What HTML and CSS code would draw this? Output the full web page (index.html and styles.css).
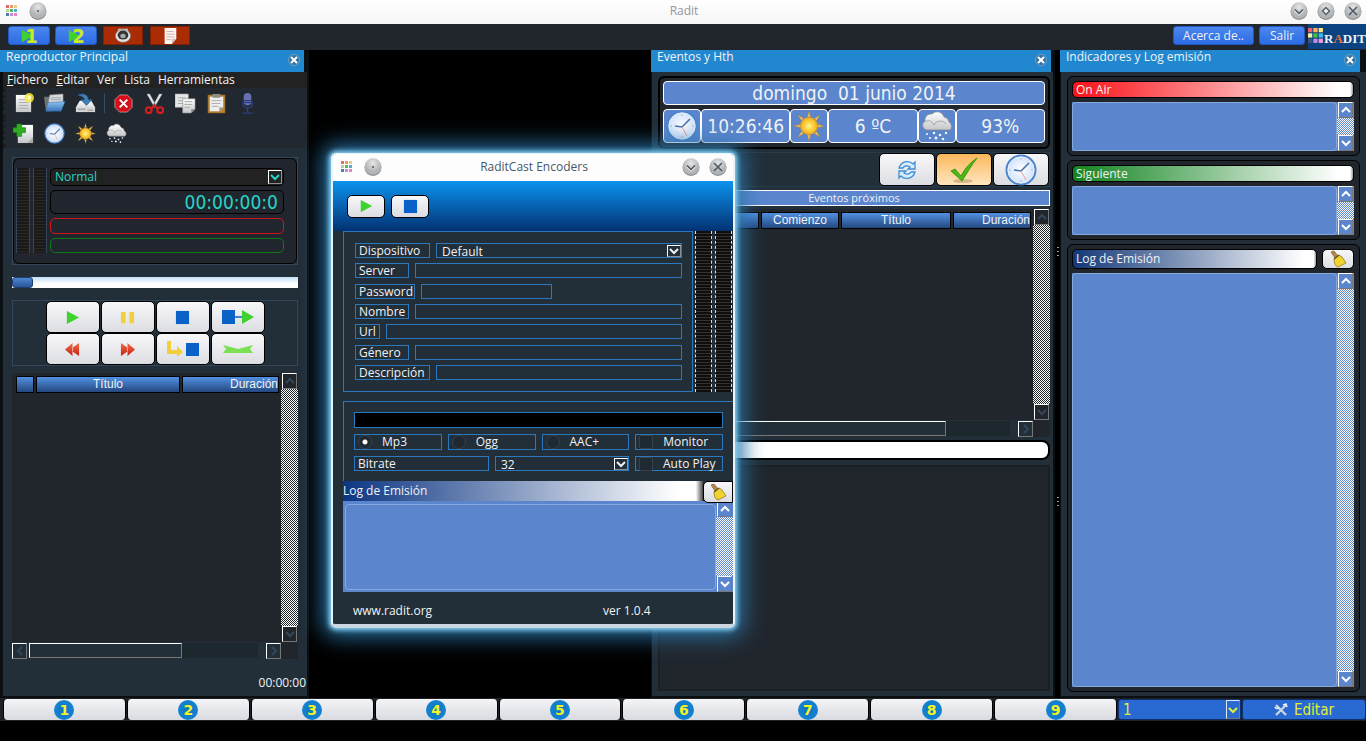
FILE: index.html
```html
<!DOCTYPE html>
<html lang="es">
<head>
<meta charset="utf-8">
<title>Radit</title>
<link rel="stylesheet" href="styles.css">
</head>
<body>
<svg class="defs" aria-hidden="true">
  <defs>
    <linearGradient id="gGrey" x1="0" y1="0" x2="0" y2="1"><stop offset="0" stop-color="#fff"/><stop offset="1" stop-color="#c4c6c8"/></linearGradient>
    <linearGradient id="gBlue" x1="0" y1="0" x2="0" y2="1"><stop offset="0" stop-color="#8fc0ee"/><stop offset="1" stop-color="#3a78bd"/></linearGradient>
    <linearGradient id="gRed" x1="0" y1="0" x2="0" y2="1"><stop offset="0" stop-color="#f0704a"/><stop offset="1" stop-color="#c81d10"/></linearGradient>
    <radialGradient id="gFace"><stop offset="0" stop-color="#fff"/><stop offset="1" stop-color="#cfe0fb"/></radialGradient>
    <radialGradient id="gSun"><stop offset="0" stop-color="#fff3a0"/><stop offset="0.5" stop-color="#ffd23e"/><stop offset="1" stop-color="#f3b01c"/></radialGradient>
    <radialGradient id="gKnob" cx="0.5" cy="0.3"><stop offset="0" stop-color="#e6e6e6"/><stop offset="1" stop-color="#b2b4b6"/></radialGradient>
  </defs>
  <symbol id="grid" viewBox="0 0 12 12">
    <path fill="#e0696e" d="M0 0h3v3H0z"/><path fill="#ea9a70" d="M4 0h3v3H4z"/><path fill="#e9cf82" d="M8 0h3v3H8z"/>
    <path fill="#b4d6a0" d="M0 4h3v3H0z"/><path fill="#58b860" d="M4 4h3v3H4z"/><path fill="#4fb0cf" d="M8 4h3v3H8z"/>
    <path fill="#4a7fb0" d="M0 8h3v3H0z"/><path fill="#c78fd0" d="M4 8h3v3H4z"/><path fill="#e585bd" d="M8 8h3v3H8z"/>
  </symbol>
  <symbol id="logo-grid" viewBox="0 0 15 15">
    <path fill="#f0606a" d="M0 0h4v4H0z"/><path fill="#ffb45a" d="M5 0h4v4H5z"/><path fill="#ffe27a" d="M10 0h4v4h-4z"/>
    <path fill="#f4f0a8" d="M0 5h4v4H0z"/><path fill="#3cc23c" d="M5 5h4v4H5z"/><path fill="#47b7ee" d="M10 5h4v4h-4z"/>
    <path fill="#3c5878" d="M0 10h4v4H0z"/><path fill="#c58be0" d="M5 10h4v4H5z"/><path fill="#f49ad0" d="M10 10h4v4h-4z"/>
  </symbol>
  <symbol id="knob" viewBox="0 0 18 18"><circle cx="9" cy="9.500" r="8.500" fill="#8c8e90"/><circle cx="9" cy="8.500" r="8.300" fill="url(#gKnob)"/></symbol>
  <symbol id="k-dot" viewBox="0 0 18 18"><use href="#knob"/><circle cx="9" cy="9" r="1" fill="#555"/></symbol>
  <symbol id="k-down" viewBox="0 0 18 18"><use href="#knob"/><path d="M5 8.500l4 4 4-4" fill="none" stroke="#fff" stroke-width="1.600"/><path d="M5 7.500l4 4 4-4" fill="none" stroke="#4e5a64" stroke-width="1.600"/></symbol>
  <symbol id="k-max" viewBox="0 0 18 18"><use href="#knob"/><path d="M9 5.500l3.500 3.500L9 12.500 5.500 9z" fill="#eee" stroke="#55606a" stroke-width="1.500"/></symbol>
  <symbol id="k-close" viewBox="0 0 18 18"><use href="#knob"/><path d="M5 5l8 8M13 5l-8 8" stroke="#4e5a64" stroke-width="1.600"/></symbol>
  <symbol id="dock-x" viewBox="0 0 12 12"><circle cx="6" cy="6" r="5.500" fill="#35729f" stroke="#7fa9c8" stroke-width=".8"/><path d="M3 3l6 6M9 3l-6 6" stroke="#fff" stroke-width="2"/></symbol>
  <symbol id="new" viewBox="0 0 22 22"><path d="M3 2h16v18H3z" fill="url(#gGrey)"/><path d="M6 7h8M6 10h10M6 13h10M6 16h10" stroke="#aaa" stroke-width="1"/><circle cx="17" cy="5" r="5" fill="#f7e93a" opacity=".85"/><circle cx="17" cy="5" r="2" fill="#fffcc0"/></symbol>
  <symbol id="open" viewBox="0 0 22 22"><path d="M0 4h6l1 2h2v13H2z" fill="#6f7478"/><path d="M6 2l14-1v12H4z" fill="#d8dadc" stroke="#888" stroke-width=".6"/><path d="M7 5h11M7 7h11" stroke="#a0a3a6"/><path d="M4 10l18-1-4 10H2z" fill="url(#gBlue)" stroke="#2f66a5" stroke-width=".5"/></symbol>
  <symbol id="save" viewBox="0 0 22 22"><path d="M5 8h12l4 7v5H1v-5z" fill="url(#gGrey)"/><path d="M1 15h20v5H1z" fill="#d3d5d6"/><path d="M3 17h8M13 18h6" stroke="#8b8e90"/><path d="M3 2c7-3 11 1 11 5h4l-6 6-6-6h4c0-2-3-4-7-5z" fill="#3e7fb6" stroke="#285e92" stroke-width=".6"/></symbol>
  <symbol id="stop-x" viewBox="0 0 22 22"><path d="M7 2h8l5 5v8l-5 5H7l-5-5V7z" fill="#d40f1b" stroke="#f4d0d0" stroke-width=".6"/><path d="M7 7l8 8M15 7l-8 8" stroke="#fff" stroke-width="2"/></symbol>
  <symbol id="cut" viewBox="0 0 22 22"><path d="M3 1l3 0 7 13-2 1zM19 1l-3 0-7 13 2 1z" fill="#e3e5e6" stroke="#999" stroke-width=".4"/><g fill="none" stroke="#d61d22" stroke-width="2.200"><ellipse cx="5" cy="18" rx="3" ry="3"/><ellipse cx="17" cy="18" rx="3" ry="3"/><path d="M8 16l3-3 3 3"/></g></symbol>
  <symbol id="copy" viewBox="0 0 22 22"><path d="M0 1h14v14H0z" fill="#e5e6e7" stroke="#999" stroke-width=".6"/><path d="M3 5h8M3 8h7M3 11h7" stroke="#aaa"/><path d="M8 6h13v11l-4 4H8z" fill="url(#gGrey)" stroke="#888" stroke-width=".6"/><path d="M10 9h8M10 12h8M10 15h6" stroke="#aaa"/><path d="M17 21v-4h4z" fill="#888"/></symbol>
  <symbol id="paste" viewBox="0 0 22 22"><path d="M2 2h18v19H2z" fill="#b88638" stroke="#7d5413" stroke-width=".6"/><path d="M4 4h14v11l-4 4H4z" fill="#eee"/><path d="M6 8h10M6 11h9M6 14h7" stroke="#aaa"/><path d="M7 1h8v4H7z" fill="#8b9087"/><path d="M14 19v-4h4z" fill="#999"/></symbol>
  <symbol id="mic" viewBox="0 0 22 22"><rect x="7" y="0" width="8" height="13" rx="4" fill="#6870b4"/><path d="M7 8h8M7 10h8" stroke="#26306e"/><path d="M6 9v2c0 6 10 6 10 0V9M11 16v4M6 21h10" fill="none" stroke="#303e8c" stroke-width="1.400"/></symbol>
  <symbol id="add" viewBox="0 0 22 22"><path d="M5 2h16v19H5z" fill="url(#gGrey)"/><path d="M15 21l6-6v6z" fill="#aaa"/><path d="M4 1h5v4h4v5H9v4H4v-4H0V5h4z" fill="#2fae20" stroke="#197b13" stroke-width=".7"/></symbol>
  <symbol id="clock" viewBox="0 0 32 32"><circle cx="16" cy="16" r="14.500" fill="url(#gFace)" stroke="#4a86cc" stroke-width="2"/><circle cx="16" cy="16" r="13" fill="none" stroke="#e6effb" stroke-width="1"/><path d="M16 4v2M16 26v2M4 16h2M26 16h2" stroke="#a9bdd8" stroke-width="1"/><path d="M9 16l7 1 8-8" fill="none" stroke="#4a72ac" stroke-width="1.600"/><path d="M16 17l5 9" stroke="#f0a090" stroke-width="1"/></symbol>
  <symbol id="sun" viewBox="0 0 32 32"><path d="M16 1l1.500 6h-3zM16 31l1.500-6h-3zM1 16l6-1.500v3zM31 16l-6-1.500v3zM5 5l5.500 3.500-2 2zM27 5l-5.500 3.500 2 2zM5 27l5.500-3.500-2-2zM27 27l-5.500-3.500 2-2z" fill="#f2c46a" stroke="#b9822c" stroke-width=".5"/><circle cx="16" cy="16" r="8.500" fill="url(#gSun)" stroke="#e09a1c" stroke-width=".8"/></symbol>
  <symbol id="snow" viewBox="0 0 32 32"><path d="M5 20a5 5 0 0 1-1-9 6 6 0 0 1 7-7 7 7 0 0 1 12 3 6 6 0 0 1 5 5 5 5 0 0 1 1 8z" fill="url(#gGrey)" stroke="#85898d" stroke-width=".8"/><path d="M4 12c4-3 8 0 9 3 2-5 10-5 12-1" fill="none" stroke="#a3a6a9"/><g fill="#eef6ff"><circle cx="6" cy="24" r="1.100"/><circle cx="13" cy="23" r="1.300"/><circle cx="19" cy="25" r="1.300"/><circle cx="25" cy="23" r="1.200"/><circle cx="9" cy="28" r="1.100"/><circle cx="15" cy="28" r="1.500"/><circle cx="22" cy="29" r="1.300"/></g></symbol>
  <symbol id="speaker" viewBox="0 0 22 20"><path d="M4 7l2-5h10l2 5z" fill="#d0d2d4"/><ellipse cx="11" cy="10" rx="8.500" ry="7" fill="#e2e2e2" stroke="#666" stroke-width=".6"/><ellipse cx="11" cy="9" rx="6" ry="5" fill="#333"/><ellipse cx="11" cy="10" rx="3" ry="2.500" fill="#a5a9ad"/></symbol>
  <symbol id="page" viewBox="0 0 22 20"><path d="M5 1h13v12l-5 6H5z" fill="#fbf4f0"/><path d="M7 5h8M7 8h9M7 11h9M7 14h5" stroke="#d9a9a0"/><path d="M13 19v-6h5z" fill="#c9c1bc"/></symbol>
  <symbol id="play" viewBox="0 0 16 16"><path d="M2 1l13 7-13 7z" fill="#3fd22e"/></symbol>
  <symbol id="pause" viewBox="0 0 16 16"><path d="M1 2h5v12H1zM10 2h5v12h-5z" fill="#f2d03c"/></symbol>
  <symbol id="stop" viewBox="0 0 16 16"><path d="M1 1h14v14H1z" fill="#0a62c9"/></symbol>
  <symbol id="stopplay" viewBox="0 0 34 16"><path d="M1 1h13v14H1z" fill="#0a62c9"/><path d="M14 8h8" stroke="#0a62c9" stroke-width="1.500"/><path d="M21 1l12 7-12 7z" fill="#3fd22e"/></symbol>
  <symbol id="rew" viewBox="0 0 16 16"><path d="M8 1v5l7-5v14l-7-5v5L0 8z" fill="url(#gRed)"/><path d="M8 6v4" stroke="#fff" stroke-width=".6"/></symbol>
  <symbol id="fwd" viewBox="0 0 16 16"><path d="M8 1v5L1 1v14l7-5v5l8-7z" fill="url(#gRed)"/><path d="M8 6v4" stroke="#fff" stroke-width=".6"/></symbol>
  <symbol id="jump" viewBox="0 0 34 16"><path d="M1 0h4v9h6V5l6 6-6 5v-3H1z" fill="#f2cf3e"/><path d="M20 2h13v13H20z" fill="#0a62c9"/></symbol>
  <symbol id="fade" viewBox="0 0 32 10"><path d="M1 1l15 4 15-4-3 4 3 4H1l3-4z" fill="#7be052"/></symbol>
  <symbol id="refresh" viewBox="0 0 20 20"><g fill="#d9ecfb" stroke="#3d8fd6" stroke-width="1.300"><path d="M2 8c2-7 10-8 14-4l2-2v7h-7l2-2c-3-2-6-1-7 1z"/><path d="M18 12c-2 7-10 8-14 4l-2 2v-7h7l-2 2c3 2 6 1 7-1z"/></g></symbol>
  <symbol id="check" viewBox="0 0 30 28"><ellipse cx="14" cy="25" rx="10" ry="2" fill="#8a6a30" opacity=".35"/><path d="M2 15l4-2 6 7c4-8 9-13 16-18-6 8-10 15-15 23z" fill="#4fb813" stroke="#2f8a0b" stroke-width=".8"/></symbol>
  <symbol id="broom" viewBox="0 0 20 20"><path d="M3 3l3-1 4 5-3 2z" fill="#b58a4c" stroke="#6d4c1c" stroke-width=".6"/><path d="M6 10l5-4 3 2 4 6-8 4c-3-1-4-4-4-8z" fill="#efd332" stroke="#9a7c14" stroke-width=".8"/><path d="M6 10l5-4" stroke="#6a5220" stroke-width="1.500"/></symbol>
  <symbol id="tools" viewBox="0 0 14 14"><path d="M2 2l10 10M12 2L2 12" stroke="#cfd8e2" stroke-width="2.200"/><path d="M1 4a3 3 0 0 0 4 1M9 2l3-1 1 3" fill="none" stroke="#e7edf4" stroke-width="1.600"/></symbol>
  <symbol id="up" viewBox="0 0 10 8"><path d="M1 6l4-4 4 4" fill="none" stroke="currentColor" stroke-width="2"/></symbol>
  <symbol id="down" viewBox="0 0 10 8"><path d="M1 2l4 4 4-4" fill="none" stroke="currentColor" stroke-width="2"/></symbol>
  <symbol id="left" viewBox="0 0 8 10"><path d="M6 1L2 5l4 4" fill="none" stroke="currentColor" stroke-width="2"/></symbol>
  <symbol id="right" viewBox="0 0 8 10"><path d="M2 1l4 4-4 4" fill="none" stroke="currentColor" stroke-width="2"/></symbol>
</svg>

<div class="app">
  <header class="titlebar">
    <div class="side">
      <svg class="i12"><use href="#grid"/></svg>
      <button class="knob" aria-label="Fijar"><svg><use href="#k-dot"/></svg></button>
    </div>
    <h1>Radit</h1>
    <div class="side end">
      <button class="knob" aria-label="Minimizar"><svg><use href="#k-down"/></svg></button>
      <button class="knob" aria-label="Maximizar"><svg><use href="#k-max"/></svg></button>
      <button class="knob" aria-label="Cerrar"><svg><use href="#k-close"/></svg></button>
    </div>
  </header>

  <nav class="topbar">
    <button class="tb-blue tb-num"><svg class="i14"><use href="#play"/></svg><b>1</b></button>
    <button class="tb-blue tb-num"><svg class="i14"><use href="#play"/></svg><b>2</b></button>
    <button class="tb-red" aria-label="Altavoz"><svg><use href="#speaker"/></svg></button>
    <button class="tb-red" aria-label="Documento"><svg><use href="#page"/></svg></button>
    <span class="spacer"></span>
    <button class="tb-blue tb-about">Acerca de..</button>
    <button class="tb-blue tb-exit">Salir</button>
    <div class="logo"><svg><use href="#logo-grid"/></svg><span>R<i>A</i>DIT</span></div>
  </nav>

  <main class="work">
    <section class="dock dock-left">
      <div class="dock-title"><h2>Reproductor Principal</h2><button aria-label="Cerrar panel"><svg><use href="#dock-x"/></svg></button></div>
      <div class="dock-body">
        <nav class="menubar"><a href="#f"><u>F</u>ichero</a><a href="#e"><u>E</u>ditar</a><a href="#v">Ver</a><a href="#l">Lista</a><a href="#h">Herramientas</a></nav>
        <div class="tools">
          <button aria-label="Nuevo"><svg><use href="#new"/></svg></button><button aria-label="Abrir"><svg><use href="#open"/></svg></button><button aria-label="Guardar"><svg><use href="#save"/></svg></button><span class="sep"></span><button aria-label="Borrar"><svg><use href="#stop-x"/></svg></button><button aria-label="Cortar"><svg><use href="#cut"/></svg></button><button aria-label="Copiar"><svg><use href="#copy"/></svg></button><button aria-label="Pegar"><svg><use href="#paste"/></svg></button><button aria-label="Micrófono"><svg><use href="#mic"/></svg></button>
        </div>
        <div class="tools">
          <button aria-label="Añadir"><svg><use href="#add"/></svg></button><button aria-label="Hora"><svg><use href="#clock"/></svg></button><button aria-label="Temperatura"><svg><use href="#sun"/></svg></button><button aria-label="Humedad"><svg><use href="#snow"/></svg></button>
        </div>
        <div class="player">
          <div class="display">
            <span class="meter"></span><span class="meter"></span>
            <div class="readouts">
              <div class="mode select"><select aria-label="Modo"><option>Normal</option></select><span class="arrow"><svg><use href="#down"/></svg></span></div>
              <output class="time">00:00:00:0</output>
              <div class="bar red"></div>
              <div class="bar green"></div>
            </div>
          </div>
        </div>
        <input class="seek" type="range" value="0" aria-label="Posición">
        <div class="transport">
          <button aria-label="Reproducir"><svg class="i16"><use href="#play"/></svg></button>
          <button aria-label="Pausa"><svg class="i16"><use href="#pause"/></svg></button>
          <button aria-label="Parar"><svg class="i16"><use href="#stop"/></svg></button>
          <button aria-label="Parar y seguir"><svg class="i34"><use href="#stopplay"/></svg></button>
          <button aria-label="Atrás"><svg class="i16"><use href="#rew"/></svg></button>
          <button aria-label="Adelante"><svg class="i16"><use href="#fwd"/></svg></button>
          <button aria-label="Parar al final"><svg class="i34"><use href="#jump"/></svg></button>
          <button aria-label="Fundido"><svg class="i32"><use href="#fade"/></svg></button>
        </div>
        <div class="list">
          <div class="list-view">
            <table class="grid"><colgroup><col class="c-20"><col class="c-146"><col></colgroup><thead><tr><th></th><th>Título</th><th class="cut">Duración</th></tr></thead></table>
          </div>
          <div class="vscroll dark"><button aria-label="Subir"><svg><use href="#up"/></svg></button><span class="track"></span><button aria-label="Bajar"><svg><use href="#down"/></svg></button></div>
          <div class="hscroll"><button aria-label="Izquierda"><svg><use href="#left"/></svg></button><span class="track"><span class="thumb thumb-a"></span></span><button aria-label="Derecha"><svg><use href="#right"/></svg></button></div>
        </div>
        <div class="total">00:00:00</div>
      </div>
    </section>

    <div class="stage"></div>

    <section class="dock dock-mid">
      <div class="dock-title"><h2>Eventos y Hth</h2><button aria-label="Cerrar panel"><svg><use href="#dock-x"/></svg></button></div>
      <div class="dock-body">
        <div class="clockbox">
          <div class="cell date">domingo&nbsp; 01 junio 2014</div>
          <div class="cell"><svg><use href="#clock"/></svg></div><div class="cell">10:26:46</div>
          <div class="cell"><svg><use href="#sun"/></svg></div><div class="cell">6 ºC</div>
          <div class="cell"><svg><use href="#snow"/></svg></div><div class="cell">93%</div>
        </div>
        <div class="evt-tools">
          <button aria-label="Actualizar"><svg class="i20"><use href="#refresh"/></svg></button>
          <button class="on" aria-label="Activar"><svg class="i28"><use href="#check"/></svg></button>
          <button aria-label="Reloj"><svg class="i30"><use href="#clock"/></svg></button>
        </div>
        <h3 class="evt-title">Eventos próximos</h3>
        <div class="list evt-list">
          <div class="list-view">
            <table class="grid"><colgroup><col><col class="c-80"><col class="c-112"><col class="c-80"></colgroup><thead><tr><th></th><th>Comienzo</th><th>Título</th><th class="cut">Duración</th></tr></thead></table>
          </div>
          <div class="vscroll dark"><button aria-label="Subir"><svg><use href="#up"/></svg></button><span class="track"></span><button aria-label="Bajar"><svg><use href="#down"/></svg></button></div>
          <div class="hscroll"><button aria-label="Izquierda"><svg><use href="#left"/></svg></button><span class="track"><span class="thumb thumb-b"></span></span><button aria-label="Derecha"><svg><use href="#right"/></svg></button></div>
        </div>
        <div class="pill"></div>
        <div class="well"></div>
      </div>
    </section>

    <div class="splitter"><span></span><span></span></div>

    <section class="dock dock-right">
      <div class="dock-title"><h2>Indicadores y Log emisión</h2><button aria-label="Cerrar panel"><svg><use href="#dock-x"/></svg></button></div>
      <div class="dock-body">
        <div class="logbox">
          <label class="tag tag-red" for="onair">On Air</label>
          <div class="area"><textarea id="onair" readonly></textarea><div class="vscroll"><button aria-label="Subir"><svg><use href="#up"/></svg></button><span class="track"></span><button aria-label="Bajar"><svg><use href="#down"/></svg></button></div></div>
        </div>
        <div class="logbox">
          <label class="tag tag-green" for="next">Siguiente</label>
          <div class="area"><textarea id="next" readonly></textarea><div class="vscroll"><button aria-label="Subir"><svg><use href="#up"/></svg></button><span class="track"></span><button aria-label="Bajar"><svg><use href="#down"/></svg></button></div></div>
        </div>
        <div class="logbox grow">
          <div class="loghead"><label class="tag tag-blue" for="log">Log de Emisión</label><button class="sweep" aria-label="Limpiar"><svg class="i20"><use href="#broom"/></svg></button></div>
          <div class="area"><textarea id="log" readonly></textarea><div class="vscroll"><button aria-label="Subir"><svg><use href="#up"/></svg></button><span class="track"></span><button aria-label="Bajar"><svg><use href="#down"/></svg></button></div></div>
        </div>
      </div>
    </section>
  </main>

  <footer class="carts">
    <button class="cart"><b>1</b></button><button class="cart"><b>2</b></button><button class="cart"><b>3</b></button><button class="cart"><b>4</b></button><button class="cart"><b>5</b></button><button class="cart"><b>6</b></button><button class="cart"><b>7</b></button><button class="cart"><b>8</b></button><button class="cart"><b>9</b></button>
    <div class="select bank"><select aria-label="Banco"><option>1</option></select><span class="arrow"><svg><use href="#down"/></svg></span></div>
    <button class="edit"><svg class="i14"><use href="#tools"/></svg>Editar</button>
  </footer>
</div>

<section class="dialog" role="dialog" aria-label="RaditCast Encoders">
  <header class="dlg-title">
    <div class="side">
      <svg class="i12"><use href="#grid"/></svg>
      <button class="knob" aria-label="Fijar"><svg><use href="#k-dot"/></svg></button>
    </div>
    <h2>RaditCast Encoders</h2>
    <div class="side end">
      <button class="knob" aria-label="Minimizar"><svg><use href="#k-down"/></svg></button>
      <button class="knob" aria-label="Cerrar"><svg><use href="#k-close"/></svg></button>
    </div>
  </header>
  <div class="dlg-head">
    <button aria-label="Emitir"><svg class="i14"><use href="#play"/></svg></button>
    <button aria-label="Detener"><svg class="i16"><use href="#stop"/></svg></button>
  </div>
  <div class="dlg-main">
    <div class="conn">
      <form class="fields">
        <div class="row"><label class="w75" for="dev">Dispositivo</label><div class="select"><select id="dev"><option>Default</option></select><span class="arrow"><svg><use href="#down"/></svg></span></div></div>
        <div class="row"><label class="w54" for="srv">Server</label><input id="srv"></div>
        <div class="row"><label class="w60" for="pwd">Password</label><input id="pwd" class="short" type="password"></div>
        <div class="row"><label class="w54" for="nom">Nombre</label><input id="nom"></div>
        <div class="row"><label class="w25" for="url">Url</label><input id="url"></div>
        <div class="row"><label class="w54" for="gen">Género</label><input id="gen"></div>
        <div class="row"><label class="w75" for="des">Descripción</label><input id="des"></div>
      </form>
      <span class="vu"></span><span class="vu"></span>
    </div>
    <div class="enc">
      <div class="status"></div>
      <div class="opts">
        <label><input type="radio" name="fmt" checked><span>Mp3</span></label>
        <label><input type="radio" name="fmt"><span>Ogg</span></label>
        <label><input type="radio" name="fmt"><span>AAC+</span></label>
        <label><input type="checkbox"><span>Monitor</span></label>
      </div>
      <div class="rates">
        <label class="rate" for="rate">Bitrate</label>
        <div class="select"><select id="rate"><option>32</option></select><span class="arrow"><svg><use href="#down"/></svg></span></div>
        <label class="auto"><input type="checkbox"><span>Auto Play</span></label>
      </div>
    </div>
    <div class="dlg-log"><label for="dlog">Log de Emisión</label><button class="sweep" aria-label="Limpiar"><svg class="i20"><use href="#broom"/></svg></button></div>
    <div class="area"><textarea id="dlog" readonly></textarea><div class="vscroll"><button aria-label="Subir"><svg><use href="#up"/></svg></button><span class="track"></span><button aria-label="Bajar"><svg><use href="#down"/></svg></button></div></div>
    <footer class="dlg-foot"><a href="#site">www.radit.org</a><span>ver 1.0.4</span></footer>
  </div>
</section>
</body>
</html>
```
FILE: styles.css
```css
* { box-sizing: border-box; }
html, body { height: 100%; }
body { margin: 0; background: #000; color: #f0f2f4; font: 12px/16px "Open Sans", "Noto Sans", sans-serif; overflow: hidden; }
button, input, select, textarea { font: inherit; color: inherit; margin: 0; padding: 0; border: 0; background: none; }
button { display: flex; align-items: center; justify-content: center; }
h1, h2, h3 { margin: 0; font: inherit; }
a { color: inherit; text-decoration: none; }
svg { display: block; flex: none; }
.defs { position: absolute; width: 0; height: 0; }
.i12 { width: 12px; height: 12px; }
.i14 { width: 14px; height: 14px; }
.i16 { width: 15px; height: 15px; }
.i20 { width: 20px; height: 20px; }
.i28 { width: 30px; height: 28px; }
.i30 { width: 32px; height: 32px; }
.i32 { width: 32px; height: 10px; }
.i34 { width: 34px; height: 16px; }

.app { display: flex; flex-direction: column; height: 100%; padding-bottom: 20px; }

.titlebar { display: flex; align-items: center; height: 24px; flex: none; padding: 0 4px 2px 6px; background: linear-gradient(#fff, #f6f6f6); color: #939799; }
.side { flex: 1; display: flex; align-items: center; gap: 9px; }
.end { justify-content: flex-end; }
.side .i12 { margin-right: 2px; }
.knob svg { width: 18px; height: 18px; }

.topbar { display: flex; align-items: center; height: 26px; flex: none; background: #21262d; padding: 0 0 3px 8px; }
.topbar button { height: 19px; }
.tb-blue { background: linear-gradient(#4b87ec, #2c6be6); border: 1px solid #2259c0; border-radius: 3px; }
.topbar .tb-num { width: 42px; margin-right: 5px; }
.tb-num svg { margin-right: -9px; }
.tb-num b { font: bold 20px/18px "DejaVu Sans Condensed", "DejaVu Sans", sans-serif; color: #c8ea24; position: relative; }
.tb-red { width: 40px; background: #a92c05; border: 1px solid #7d2004; margin: 0 6px 0 1px; }
.tb-red svg { width: 20px; height: 18px; }
.spacer { flex: 1; }
.tb-about { width: 81px; margin-right: 5px; }
.tb-exit { width: 46px; margin-right: 3px; }
.logo { width: 58px; height: 25px; display: flex; overflow: hidden; background: #0b4282; align-self: flex-start; }
.logo svg { width: 16px; height: 16px; margin-top: 4px; }
.logo span { font: bold 13px/30px "Liberation Serif", serif; }
.logo i { color: #e2733a; font-style: normal; }

.work { flex: 1; min-height: 0; display: flex; }
.dock { display: flex; flex-direction: column; background: #0c0f11; padding-bottom: 2px; }
.dock-title { display: flex; height: 22px; flex: none; background: #2188cf; margin-right: 5px; padding: 0 4px 0 6px; }
.dock-title h2 { flex: 1; line-height: 14px; }
.dock-title button { align-self: flex-end; padding-bottom: 6px; }
.dock-title svg { width: 12px; height: 12px; }
.dock-body { flex: 1; min-height: 0; display: flex; flex-direction: column; background: #222e38; margin-right: 2px; }
.dock-left { width: 309px; }
.dock-left .dock-body { margin-left: 3px; }
.stage { flex: 1; }
.dock-mid { width: 404px; }
.dock-mid .dock-title { margin-right: 4px; }
.splitter { width: 5px; display: flex; flex-direction: column; align-items: center; padding-top: 197px; gap: 241px; }
.splitter span { width: 2px; height: 9px; background: repeating-linear-gradient(#999 0 1px, #000 1px 4px); }
.dock-right { width: 306px; }
.dock-right .dock-title { margin-right: 6px; }

.menubar { display: flex; gap: 8px; height: 16px; flex: none; background: #222; padding-left: 4px; }
.tools { display: flex; align-items: center; height: 30px; flex: none; padding-left: 2px; background: #21282f; border-left: 3px dotted #1a1f24; }
.tools button { width: 31px; }
.tools svg { width: 21px; height: 21px; }
.tools .sep { width: 1px; height: 20px; background: #2d4f6b; margin: 0 3px; }

.player { margin: 9px 9px 0; border: 1px solid #34475a; flex: none; }
.display { display: flex; gap: 3px; border: 1px solid #000; border-radius: 6px; background: #21262e; padding: 9px 12px 10px 2px; height: 106px; }
.meter { width: 14px; border: 1px solid #34475a; border-width: 0 1px; background: repeating-linear-gradient(#191919 0 2px, #2a2826 2px 3px); }
.readouts { flex: 1; display: flex; flex-direction: column; gap: 4px; color: #27d3c5; }
.mode, .time, .bar { border: 1px solid #000; border-radius: 5px; }
.mode { height: 18px; background: #222; padding-left: 4px; }
.time { height: 24px; text-align: right; padding-right: 5px; font: 19px/22px "DejaVu Sans Condensed", "DejaVu Sans", sans-serif; }
.bar { height: 16px; }
.red { border-color: #d0161c; }
.green { border-color: #0c7a17; }

.select { display: flex; align-items: center; }
.select select { appearance: none; flex: 1; min-width: 0; height: 100%; outline: 0; }
.mode select { padding-bottom: 2px; }
.arrow { width: 14px; height: 14px; display: flex; align-items: center; justify-content: center; border: 1px solid #fff; border-right-color: #8a8f94; border-bottom-color: #8a8f94; pointer-events: none; }
.arrow svg { width: 10px; height: 8px; }
.mode .arrow { margin-right: 1px; }

.seek { appearance: none; height: 11px; margin: 12px 9px 0; flex: none; background: linear-gradient(#c3dff7, #fff 60%); }
.seek::-webkit-slider-thumb { appearance: none; width: 21px; height: 11px; background: linear-gradient(#4b86cf, #2a5698); border: 1px solid #1f3f70; border-radius: 3px; }
.transport { margin: 12px 9px 0; border: 1px solid #34475a; height: 66px; flex: none; display: grid; grid-template-columns: repeat(4, 54px); justify-content: center; align-content: center; gap: 0 1px; }
.transport button, .evt-tools button, .sweep, .dlg-head button { background: linear-gradient(#f8f8fa, #dcdde2); border: 1px solid #000; border-radius: 5px; }
.transport button { height: 32px; }

.list { display: grid; grid-template: minmax(0, 1fr) 17px / minmax(0, 1fr) 17px; flex: 1; min-height: 0; margin: 7px 9px 0; background: #21262d; }
.list-view { overflow: hidden; padding: 1px 0 0 2px; }
.grid { width: 100%; table-layout: fixed; border-spacing: 2px; font: 12px/15px "Liberation Sans", Arial, sans-serif; }
.grid th { height: 17px; padding: 0; font-weight: normal; background: linear-gradient(#5190e2, #24487f); border: 1px solid #000; }
.grid .cut { text-align: right; }
.c-20 { width: 18px; }
.c-146 { width: 144px; }
.c-80 { width: 78px; }
.c-112 { width: 110px; }
.vscroll { width: 17px; display: flex; flex-direction: column; align-items: center; color: #fff; background: #5b86cd; flex: none; }
.vscroll button, .hscroll button { width: 15px; height: 16px; flex: none; border: 1px solid #fff; border-right-color: #777; border-bottom-color: #777; }
.vscroll svg { width: 10px; height: 8px; }
.vscroll .track { flex: 1; width: 17px; background: repeating-conic-gradient(#fff 0 25%, #5b86cd 0 50%) 0 0 / 2px 2px; }
.dark { color: #34485a; background: #21262d; }
.dark .track { background: repeating-conic-gradient(#fff 0 25%, #21262d 0 50%) 0 0 / 2px 2px; }
.hscroll { display: flex; align-items: center; gap: 2px; color: #34485a; background: #222e38; }
.hscroll svg { width: 8px; height: 10px; }
.hscroll .track { flex: 1; height: 15px; background: #1d272e; margin-right: 6px; }
.thumb { display: block; height: 15px; background: #222e38; border: 1px solid #fff; border-right-color: #777; border-bottom-color: #777; }
.thumb-a { width: 67%; }
.thumb-b { width: 81%; }
.total { flex: none; height: 37px; line-height: 48px; text-align: right; padding-right: 1px; }

.dock-mid .dock-body { padding: 4px 3px 5px 6px; border-left: 1px solid #0c0f11; }
.clockbox { flex: none; display: grid; grid-template-columns: 38px 1fr 38px 1fr 38px 1fr; grid-template-rows: 24px 34px; row-gap: 4px; border: 2px solid #000; border-radius: 6px; background: #21262d; padding: 3px 3px 4px; font: 19px/22px "DejaVu Sans Condensed", "DejaVu Sans", sans-serif; }
.cell { display: flex; align-items: center; justify-content: center; background: #5b86cd; border: 1px solid #fff; border-radius: 4px; }
.cell svg { width: 32px; height: 32px; }
.date { grid-column: 1 / -1; }
.evt-tools { flex: none; display: flex; justify-content: flex-end; gap: 1px; height: 35px; margin-top: 3px; border: 1px solid #283b48; }
.evt-tools button { width: 56px; height: 33px; }
.evt-tools .on { background: linear-gradient(#fbb75c, #ffe6bf); }
.evt-title { flex: none; height: 16px; line-height: 13px; margin-top: 3px; background: #5b86cd; border: 1px solid #fff; text-align: center; font-size: 11px; }
.evt-list { margin: 3px 0 0; flex: none; height: 228px; }
.pill { flex: none; height: 20px; margin-top: 3px; background: #fff; border: 2px solid #000; border-radius: 8px; }
.well { flex: 1; margin-top: 5px; border: 2px solid #1b2026; background: #21262d; }

.dock-right .dock-body { padding: 4px 6px 4px 6px; gap: 4px; margin: 0 0 0 1px; }
.logbox { height: 80px; flex: none; display: flex; flex-direction: column; gap: 4px; border: 1px solid #000; border-radius: 6px; background: #21262d; padding: 4px 5px 4px 4px; }
.grow { flex: 1; height: auto; min-height: 0; }
.tag { height: 17px; line-height: 15px; border: 1px solid #000; border-radius: 5px; padding-left: 3px; }
.tag-red { background: linear-gradient(90deg, #fb1016, #fff 95%, #fff 99%, #999); }
.tag-green { background: linear-gradient(90deg, #128420, #fff 95%, #fff 99%, #999); }
.tag-blue { flex: 1; height: 20px; line-height: 18px; background: linear-gradient(90deg, #123878, #fff 95%, #fff 99%, #999); }
.loghead { display: flex; gap: 5px; flex: none; }
.sweep { width: 32px; height: 20px; }
.area { flex: 1; min-height: 0; display: flex; background: #5b86cd; }
.area textarea { flex: 1; min-width: 0; resize: none; border: 1px solid #86a8dc; border-radius: 4px; outline: 0; }

.carts { display: grid; grid-template-columns: repeat(9, minmax(0, 1fr)) 123px 124px; gap: 1px; height: 23px; flex: none; padding: 1px 0 1px 3px; background: #1c2126; }
.cart { background: linear-gradient(#f4f4f7, #d9dbe0); border: 1px solid #000; border-width: 0 1px; border-radius: 4px; }
.cart b { width: 20px; height: 20px; border-radius: 50%; background: radial-gradient(#0f72bd, #168bdd); color: #f4f427; font: bold 14px/20px "DejaVu Sans", sans-serif; }
.bank, .edit { background: #2869d2; border: 1px solid #10316c; border-radius: 3px; color: #e4ee33; font: 15px/18px "DejaVu Sans Condensed", "DejaVu Sans", sans-serif; }
.bank { padding-left: 4px; }
.bank .arrow { height: 19px; border-color: #dfe9f8 #777 #777 #dfe9f8; }
.edit { gap: 6px; }

.dialog { position: absolute; left: 331px; top: 153px; width: 404px; border: 2px solid #e8f4fc; border-width: 1px 2px 4px; border-bottom-color: #ccd6e0; border-radius: 5px; background: #222e38; box-shadow: 0 0 5px 2px #8fdcff, 0 0 22px 8px #2b75a8; }
.dlg-title { display: flex; align-items: center; height: 27px; padding: 0 6px 2px 8px; background: #fdfdfd; color: #46586a; border-radius: 3px 3px 0 0; }
.dlg-head { height: 50px; display: flex; align-items: center; gap: 6px; padding-left: 14px; background: linear-gradient(#0b93ee, #033273); }
.dlg-head button { width: 38px; height: 23px; }
.dlg-main { padding-left: 10px; }
.conn { display: flex; gap: 2px; height: 161px; }
.fields { flex: 1; border: 1px solid #2b78bd; display: flex; flex-direction: column; justify-content: space-between; padding: 11px 10px 11px 11px; margin: 0; }
.row { display: flex; gap: 6px; height: 15px; }
.row label, .row input, .row .select, .status, .opts label, .rates > * { border: 1px solid #2b78bd; }
.row label { padding-left: 3px; line-height: 13px; }
.row input, .row .select { flex: 1; min-width: 0; outline: 0; }
.row input.short { flex: none; width: 131px; }
.row .select, .rates .select { padding-left: 5px; }
.row .arrow, .rates .arrow { height: 12px; }
.w75 { width: 75px; }
.w60 { width: 60px; }
.w54 { width: 54px; }
.w25 { width: 25px; }
.vu { width: 17px; border: 1px dashed #ddd; border-width: 0 1px; background: repeating-linear-gradient(#0e0e0e 0 2px, #35322e 2px 3px); margin-right: 1px; }
.enc { margin-top: 9px; border: 1px solid #2b78bd; border-width: 1px 0 0 1px; padding: 10px; display: flex; flex-direction: column; gap: 6px; }
.status { height: 16px; background: #000; }
.opts { display: grid; grid-template-columns: repeat(4, 1fr); gap: 6px; }
.opts label, .auto { display: flex; align-items: center; height: 16px; padding-left: 3px; }
.opts span, .auto span { flex: 1; padding-left: 10px; line-height: 14px; white-space: nowrap; }
.opts input, .auto input { appearance: none; width: 14px; height: 14px; flex: none; background: #1f2931; border: 1px solid #35414b; border-radius: 2px; }
.opts input[type=radio] { border-radius: 50%; }
.opts input:checked { background: radial-gradient(#fff 0 2px, #1f2931 3px); }
.rates { display: grid; grid-template-columns: 135px 1fr 88px; gap: 6px; }
.rates > * { height: 15px; }
.rate { padding-left: 3px; line-height: 13px; }
.dlg-log { display: flex; height: 20px; }
.dlg-log label { flex: 1; line-height: 20px; background: linear-gradient(90deg, #0c3582, #fff 93%, #fff 98%, #444); }
.dlg-log .sweep { width: 30px; height: 22px; border-radius: 5px 0 0 5px; position: relative; }
.dialog .area { height: 91px; }
.dialog .area textarea { margin: 3px 0 2px 2px; }
.dlg-foot { display: flex; gap: 171px; padding: 11px 10px 5px; }
```
